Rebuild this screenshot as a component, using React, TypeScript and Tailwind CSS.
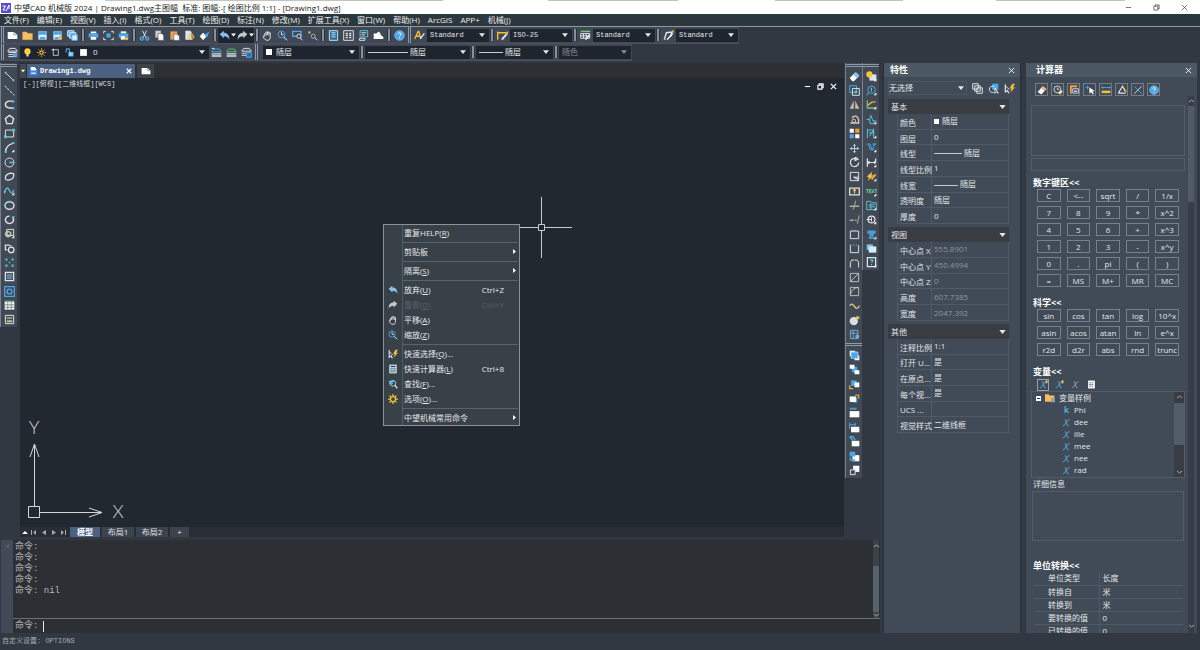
import type { ReactNode } from "react";
import clsx from "clsx";

const W = "#dfe4e8";
const B = "#4ea6e6";
const C = "#5cc3d6";
const Y = "#f2bf3c";
const corner = <path d="M15 11v4h-4z" fill="#fff" stroke="none" />;

const icons: Record<string, ReactNode> = {
  // file
  new: <><path d="M1 3h9l5 4v6H1z" fill="#fff" stroke="none" /><path d="M10 3v4h5" stroke="#7aa" /></>,
  open: <path d="M1 3h6l1.500 2H15v9H1z" fill="#f3bd70" stroke="#e09f45" strokeWidth={1} />,
  save: <><path d="M2 2h12v12H2z" fill="#dbeeff" stroke="none" /><path d="M2 2h12v5H2zM4 10h8v4H4z" fill={B} stroke="none" /></>,
  saveAs: <><path d="M2 2h12v12H2z" fill="#dbeeff" stroke="none" /><path d="M2 2h12v5H2zM4 10h5v4H4z" fill={B} stroke="none" /><path d="M8 14l6-6" stroke="#e89b3c" strokeWidth={2.5} /></>,
  saveAll: <><path d="M1 1h9v8H1z" fill={B} stroke="#dbeeff" /><path d="M4 4h9v8H4z" fill={B} stroke="#dbeeff" /><path d="M7 7h8v8H7z" fill="#dbeeff" stroke={B} /></>,
  print: <><path d="M4 2h8v3H4zM4 10h8v4H4z" fill="#fff" stroke="none" /><path d="M1 5h14v6H1z" fill={B} stroke="none" /><path d="M5 10h6v3H5z" fill="#fff" stroke="none" /></>,
  preview: <><path d="M1 5V2h3M12 2h3v3M15 11v3h-3M4 14H1v-3" stroke={W} /><path d="M5 5h6v6H5z" fill={B} stroke="none" /></>,
  plot: <><path d="M4 2h8v3H4z" fill="#fff" stroke="none" /><path d="M1 5h14v6H1z" fill={B} stroke="none" /><path d="M4 9h6v5H4z" fill="#fff" stroke="none" /><circle cx="12.500" cy="12.500" r="2.500" fill={Y} stroke="none" /></>,
  cut: <><path d="M5 1l5 10M11 1L6 11" stroke={W} /><circle cx="4" cy="12.500" r="2.200" stroke={B} strokeWidth={2} /><circle cx="12" cy="12.500" r="2.200" stroke={B} strokeWidth={2} /></>,
  copy: <><path d="M2 1h8v10H2z" fill="#c8cdd2" stroke="none" /><path d="M6 5h5l3 3v7H6z" fill="#fff" stroke="#667" strokeWidth={1} /></>,
  paste: <><path d="M2 2h10v12H2z" fill="#e8a157" stroke="none" /><path d="M7 6h5l3 3v6H7z" fill="#fff" stroke="#667" strokeWidth={1} /></>,
  matchGear: <><path d="M2 1h7l2 2v11H2z" fill="#dfe4e8" stroke="none" /><circle cx="10.500" cy="10" r="3.200" stroke={Y} strokeWidth={2.500} strokeDasharray="2 .8" /></>,
  brush: <><path d="M1 9l5-5 5 5-5 6z" fill="#fff" stroke="none" /><path d="M8 7l4 4 3-9z" fill={B} stroke="none" /></>,
  undo: <path d="M1 6l6-5v3c5 0 8 3 8 10-2-4-4-5-8-5v3z" fill="#8cbcf2" stroke="none" />,
  redo: <path d="M15 6L9 1v3C4 4 1 7 1 14c2-4 4-5 8-5v3z" fill="#c3c8cd" stroke="none" />,
  hand: <path d="M4 9V5q1-1 2 0V3q1-1 2 0 1-1 2 0v1q1-1 2 0v6c0 3-1 5-4 5-3 0-5-2-6-5-1-2 1-2 2-1zM6 5v3M8 3v4M10 4v4" stroke={W} />,
  zoom: <><circle cx="6.500" cy="6.500" r="5" stroke={B} /><path d="M6.500 3v4h3M10 10l5 5" stroke={W} /><path d="M10 13h4" stroke={B} /></>,
  zoomWindow: <><path d="M1 2h12v7H1z" stroke={B} strokeWidth={2} /><circle cx="10" cy="9" r="3" fill="#39424d" stroke={W} /><path d="M12 11l3 4" stroke={W} /></>,
  zoomPrev: <><path d="M2 2h3v3H2z" fill={Y} stroke="none" /><circle cx="9" cy="9" r="3" stroke="#9fb4c4" /><path d="M11 11l4 4" stroke={W} /></>,
  calc: <><path d="M2 1h12v14H2z" fill="#c9e2f3" stroke="none" /><path d="M4 3h8v2H4z" fill="#35414d" stroke="none" /><path d="M4 7.500h8M4 10h8M4 12.500h8" stroke="#35414d" strokeDasharray="2 1" /></>,
  sheetSet: <><path d="M2 1h12v14H2z" fill="#2d6f9c" stroke="#c9e2f3" /><path d="M5 4h6M5 7h6M5 10h6" stroke="#c9e2f3" /></>,
  grid: <><path d="M1 1h14v14H1z" stroke={W} /><path d="M4 5h8M4 8h8M4 11h8" stroke={W} strokeWidth={2} strokeDasharray="3 2" /></>,
  props: <><path d="M3 1h11v9H3z" fill="#3b4b58" stroke={C} /><path d="M5 4h7M5 7h5M2 12h8v3H2z" stroke={W} /></>,
  cloud: <path d="M1 12V5h4l3-3 3 3v2l4 3v3H1z" fill="#fff" stroke="none" />,
  help: <><circle cx="8" cy="8" r="7" fill={B} stroke="#8ccbf5" strokeWidth={1} /><path d="M6 6q0-2 2-2t2 2-2 3M8 11v1.500" stroke="#fff" /></>,
  textStyle: <><path d="M1 13L6 2h1l3 11M3 9h5" stroke={Y} strokeWidth={2} /><path d="M9 13l6-8" stroke={W} strokeWidth={2} /></>,
  dimStyle: <><path d="M1 2v12M15 2v4M1 4h13" stroke={Y} strokeWidth={2} /><path d="M7 14l7-8" stroke={W} strokeWidth={3} /></>,
  tableStyle: <><path d="M1 2h14" stroke="#7fbf7f" strokeWidth={2} /><path d="M1 5h13v7H1zM1 8.500h13M5 5v7M9 5v7" stroke={W} /><path d="M8 14l6-7" stroke="#fff" strokeWidth={2} /></>,
  leaderStyle: <><path d="M2 13L5 4l8-1-2 7" stroke={W} strokeWidth={2} /><path d="M6 14l8-9" stroke="#fff" strokeWidth={2} /><path d="M13 1h2v3M1 13l3 1" stroke={Y} /></>,
  // layers
  layers: <><path d="M4 2h8l3 4H1z" stroke={W} /><path d="M2 8h12M2 11h12M2 14h12" stroke={W} /><path d="M9 9h6v5H9z" fill={B} stroke="none" /></>,
  layerPrev: <><path d="M4 3h8l3 4H1z" stroke={B} /><path d="M1 10h14M1 13h14" stroke={W} strokeWidth={2} /><path d="M1 2h4" stroke={W} /></>,
  layerMake: <><path d="M4 3h8l3 4H1z" stroke="#67bf78" /><path d="M1 10h14M1 13h14" stroke={W} strokeWidth={2} /></>,
  layerState: <><path d="M4 2h8l3 4H1zM1 9h8M1 12h8" stroke={W} /><path d="M8 8h7v7H8z" fill="#296fa4" stroke={B} /></>,
  bulb: <><circle cx="8" cy="6" r="5.500" fill="#fbd23c" stroke="none" /><path d="M6 11h4v4H6z" fill="#d9d9d9" stroke="none" /></>,
  sun: <><circle cx="8" cy="8" r="3" stroke={Y} strokeWidth={2} /><path d="M8 0v3M8 13v3M0 8h3M13 8h3M2.500 2.500l2 2M11.500 11.500l2 2M13.500 2.500l-2 2M4.500 11.500l-2 2" stroke={Y} /></>,
  frame: <><path d="M4 3h9v10H4z" stroke={W} /><path d="M1 3h4M4 1v4" stroke={W} /></>,
  lock: <><path d="M2 8V4q0-3 3-3t3 3v4" stroke={B} strokeWidth={2} /><path d="M6 7h9v8H6z" fill="#6dc0f2" stroke="none" /><path d="M10 9v4" stroke="#fff" /></>,
  swatch: <path d="M2 2h12v12H2z" fill="#fff" stroke="none" />,
  // draw
  line: <><path d="M3 3l10 10" stroke={W} /><path d="M1 1h3v3H1zM12 12h3v3h-3z" fill={C} stroke="none" /></>,
  xline: <><path d="M1 1l14 14" stroke={W} strokeDasharray="4 1.500" /><path d="M5 5h2v2H5zM9 9h2v2H9z" fill={C} stroke="none" /></>,
  pline: <><path d="M13 3H7Q2 4 2 8t5 5h7" stroke={W} strokeWidth={2} /><path d="M12 2h3v3h-3zM12 12h3v3h-3z" fill={C} stroke="none" /></>,
  polygon: <path d="M8 2l6 4.500L12 14H4L2 6.500z" stroke={W} strokeWidth={2} />,
  rect: <><path d="M2 3h12v10H2z" stroke={W} /><path d="M0 11h4v4H0zM12 1h4v4h-4z" fill={C} stroke="none" /></>,
  arc: <><path d="M2 15Q3 4 13 2" stroke={W} strokeWidth={2} /><path d="M1 13h3v3H1zM12 0h3v3h-3z" fill={C} stroke="none" />{corner}</>,
  circle: <><circle cx="8" cy="8" r="6.500" stroke={W} /><path d="M8 8h6" stroke={C} strokeWidth={2.500} /></>,
  revcloud: <path d="M14 4q1 8-6 9-6 1-6-3 0-5 7-7 4 0 5 1z" stroke={W} strokeWidth={1.800} />,
  spline: <><path d="M1 10Q4 0 8 8t6-1" stroke={C} strokeWidth={2} /><path d="M1 9v3" stroke={W} />{corner}</>,
  ellipse: <><ellipse cx="8" cy="8" rx="6.500" ry="5.500" stroke={W} strokeWidth={2} /><path d="M7 1h3v3H7zM0 7h3v3H0z" fill={C} stroke="none" /></>,
  earc: <><path d="M13 4q3 9-5 10Q2 13 2 8q1-5 6-5" stroke={W} strokeWidth={2} /><path d="M12 3h3v3h-3z" fill={C} stroke="none" /></>,
  block: <><path d="M4 2h10v9H4z" stroke={W} /><circle cx="6" cy="9" r="4" stroke={W} /><path d="M5 6h5v4H5z" stroke="#c6b98b" />{corner}</>,
  insert: <><path d="M8 3H2v7h3M11 4H8" stroke={W} strokeWidth={1.800} /><circle cx="10.500" cy="10" r="4" stroke={W} strokeWidth={1.800} /></>,
  points: <path d="M2 2h3v3H2zM11 2h3v3h-3zM2 11h3v3H2zM11 11h3v3h-3zM7 7h2v2H7z" fill={C} stroke="none" />,
  hatch: <><path d="M2 2h12v12H2z" stroke={W} strokeWidth={1.800} /><path d="M4 4h8v8H4z" fill="#64849d" stroke="none" /></>,
  region: <><path d="M1 1h14v14H1z" stroke={B} strokeWidth={1.800} /><circle cx="8" cy="8" r="3.500" stroke={B} strokeWidth={2} /></>,
  table: <><path d="M1 3h14v11H1z" fill="#fff" stroke="none" /><path d="M1 2h14" stroke="#71b98a" strokeWidth={2} /><path d="M1 7h14M1 10.500h14M5.500 3v11M10.500 3v11" stroke="#566" strokeWidth={1} /></>,
  mtext: <><path d="M2 2h12v12H2z" stroke={W} /><path d="M4 5h8v2H4zM4 9h8v3H4z" fill="#c7bf9f" stroke="none" /></>,
  // modify
  erase: <><path d="M1 10l8-8 6 5-8 8q-3 0-6-5z" fill="#fff" stroke="none" /><path d="M6 5l3-3q3-1 6 5l-3 3z" fill="#7cc3f3" stroke="none" /></>,
  duplicate: <><path d="M1 1h10v10H1z" stroke={B} /><path d="M5 5h10v10H5z" stroke={W} /><path d="M10 7v6M7 10h6" stroke={C} /></>,
  mirror: <><path d="M7 2v12H1z" fill="#b9bcbc" stroke="none" /><path d="M9 2v12h6z" fill="#d5b98a" stroke="none" /></>,
  offset: <><path d="M2 13h12V9Q13 3 9 3T5 6" stroke="#d8cfb4" strokeWidth={2} /><circle cx="7" cy="10" r="2.500" stroke="#d8cfb4" /></>,
  array: <><path d="M1 1h6v6H1zM9 9h6v6H9z" fill="#fff" stroke="none" /><path d="M1 9h6v6H1z" fill={B} stroke="none" /><path d="M9 1h6v6H9z" fill="#efa23c" stroke="none" /></>,
  move: <path d="M8 2v12M2 8h12M6 4l2-2 2 2M6 12l2 2 2-2M4 6L2 8l2 2M12 6l2 2-2 2" stroke="#b9d2e6" />,
  rotate: <path d="M9 2q-7 0-7 6 1 6 6 6 6-1 6-6M9 0v5l4-2z" stroke={W} strokeWidth={1.800} />,
  scale: <><path d="M2 2h12v12H2z" stroke={W} /><path d="M8 9h5v5M6 9h3v3M10 10l3 3" stroke={W} /></>,
  stretch: <><path d="M1 3h14v10H1z" stroke={W} strokeWidth={1.800} /><path d="M8 11V5M6 7l2-2 2 2" stroke={Y} strokeWidth={1.800} /></>,
  trim: <><path d="M1 9h14" stroke={W} /><path d="M10 1L6 14" stroke="#c9b184" /></>,
  extend: <><path d="M1 9h6M9 9h2" stroke={W} /><path d="M15 2l-3 12" stroke="#c9b184" /></>,
  breakAt: <><path d="M2 3h12v11H2z" stroke={W} /><path d="M4 2h8" stroke={C} strokeDasharray="2 2" /></>,
  breakOff: <><path d="M14 3v11H2V3" stroke={W} /><path d="M2 3h12" stroke={C} strokeDasharray="2 2" /></>,
  join: <><path d="M2 14V6l2-3h3M9 3h3l2 3v8" stroke={W} /><path d="M5 3h6" stroke={Y} strokeDasharray="2 1" /></>,
  chamfer: <><path d="M2 2h12v12H2z" stroke="#b9bfc5" /><path d="M2 14L14 2" stroke="#d0c9a6" /></>,
  fillet: <><path d="M2 14V2h12v12z" stroke="#b9bfc5" /><path d="M2 12Q4 3 14 2" stroke="#d0c9a6" /></>,
  blend: <path d="M1 7q3-5 7 1t7-1" stroke="#cfbf8d" strokeWidth={2} />,
  explode: <><circle cx="7" cy="9" r="6" fill="#d9dfe4" stroke="none" /><path d="M10 2h5v4h-5z" fill="#dcc257" stroke="none" /></>,
  pedit: <><path d="M2 2h11v12H2zM2 6h11M6 2v12" stroke="#77abd4" /><circle cx="12" cy="11" r="3" fill="#77abd4" stroke="none" /></>,
  front: <><path d="M1 1h8v8H1zM8 8h7v7H8z" fill="#fff" stroke="none" /><path d="M3 3h10v9H3z" fill={B} stroke="#9bd3f7" /></>,
  back: <><path d="M4 4h8v8H4z" fill={B} stroke="none" /><path d="M1 1h7v6H1zM8 9h7v6H8z" fill="#fff" stroke="none" /></>,
  above: <><path d="M3 2h8v8H3z" fill={B} stroke="none" /><path d="M8 5h7v7H8z" fill="#fff" stroke="none" /><path d="M1 9v5h5" stroke="#e8a23a" strokeWidth={2} /></>,
  under: <><path d="M6 6h6v8H6z" fill={B} stroke="none" /><path d="M1 5h9v8H1z" fill="#fff" stroke="none" /><path d="M9 3h5v5" stroke="#e8a23a" strokeWidth={2} /></>,
  textFront: <><path d="M1 6h14v9H1z" fill="#fff" stroke="none" /><path d="M1 1h10v3H1z" fill="#5b91b9" stroke="none" /></>,
  dimFront: <><path d="M3 7h12v8H3z" fill="#fff" stroke="none" /><path d="M1 1v9M9 1v6M1 4h8" stroke={B} /></>,
  leadFront: <><path d="M4 7h11v8H4z" fill="#fff" stroke="none" /><path d="M1 1l5 6M1 1h5l3 5" stroke={B} strokeWidth={2} /></>,
  allFront: <><path d="M5 6h10v9H5z" fill="#fff" stroke="none" /><path d="M1 1h8v7H1z" fill={B} stroke="none" /><path d="M2 9v4h7" stroke={B} strokeWidth={2} /></>,
  hatchBack: <><path d="M6 1h9v9H6z" fill="#fff" stroke="none" /><path d="M2 7h7v7H2z" fill="#414b57" stroke={W} /></>,
  // mechanical
  mBlock: <><path d="M5 5h10v9H5z" fill="#dbe7f0" stroke="none" /><circle cx="5" cy="5" r="4.500" fill="#f6c443" stroke="none" />{corner}</>,
  mDetail: <><circle cx="8" cy="7" r="5.500" stroke={B} /><path d="M7 5l1-1v6M4 11l-3 4" stroke={C} />{corner}</>,
  mPath: <><path d="M2 2v11h12" stroke="#7fb78e" strokeWidth={2} /><path d="M3 9l5-4 6-1" stroke={Y} strokeWidth={1.800} />{corner}</>,
  mPeak: <><path d="M1 8h4l2-6 3 8h5M5 8l1 6h5l1-4" stroke={C} />{corner}</>,
  mFit: <><path d="M2 1v14M2 3h9v9M5 12l6-9M11 1v14M4 7h8" stroke={C} />{corner}</>,
  mGear: <><path d="M1 3h5l3 9 4-10M4 4l2 7h6M9 3h6" stroke={B} />{corner}</>,
  mDim: <><path d="M2 2v12M14 2v5M4 8h9M5 6L3 8l2 2M12 6l2 2-2 2" stroke={W} strokeWidth={1.800} />{corner}</>,
  mBolt: <><path d="M1 8l8-7-1 5h3L3 14l1-5z" fill={Y} stroke="none" /><path d="M8 12l6-7" stroke="#e4a744" strokeWidth={3} />{corner}</>,
  mText: <><path d="M0 5h4M2 5v5M5 5h3M5 7.500h3M5 10h3M5 5v5M9 5l3 5M12 5l-3 5M13 5h3M14.500 5v5" stroke="#6fc59b" />{corner}</>,
  mTable: <><path d="M1 2h6l1 2h7v10H1zM4 7h9M4 10h9M7 5v9" stroke={C} />{corner}</>,
  mHole: <><circle cx="8" cy="8" r="5" stroke={W} strokeWidth={1.800} /><path d="M1 8h7M8 5v6" stroke={W} />{corner}</>,
  mPart: <><path d="M2 2h12v5H2zM5 7h6v3H5zM4 11h8v3H4z" fill="#4aa0d0" stroke="none" />{corner}</>,
  mCloud: <><path d="M1 2h9v8H1z" fill="#7ec2ef" stroke="none" /><path d="M4 5h11v9H4z" fill="#d8ecfa" stroke="none" /></>,
  mHelp: <><path d="M2 1h12v13H2z" stroke={W} strokeWidth={1.800} /><path d="M6 5q2-2 4 0 0 1-2 3M8 10v2" stroke={C} strokeWidth={1.800} />{corner}</>,
  // panels and menu
  pickAdd: <path d="M1 1h8v8H1zM4 4h8v8H4zM7 7h8v8H7z" stroke={W} />,
  pickSet: <><path d="M6 1h9v9H6z" fill={B} stroke="none" /><path d="M9 5q-7-1-7 4t6 5M10 7v8l2-2 3 2z" stroke={W} /></>,
  quick: <><path d="M2 2v11l3-2 2 4" stroke={W} strokeWidth={1.800} /><path d="M2 4l6 6" stroke={W} /><path d="M12 1l-4 7h3l-2 6 7-8h-3l3-5z" fill={Y} stroke="none" /></>,
  find: <><path d="M1 4h8M2 7h6" stroke={B} strokeWidth={2.500} /><circle cx="8" cy="7" r="4.500" stroke="#bcd8ec" /><path d="M11 10l4 5" stroke={W} strokeWidth={2} /></>,
  gear: <><circle cx="8" cy="8" r="4" stroke={Y} strokeWidth={2} /><path d="M8 0v4M8 12v4M0 8h4M12 8h4M2.500 2.500l2.500 2.500M11 11l2.500 2.500M13.500 2.500L11 5M5 11l-2.500 2.500" stroke={Y} strokeWidth={2} /></>,
  eraser: <><path d="M1 11l8-9 6 4-8 9z" fill="#fff" stroke="none" /><path d="M7 5l2-3 6 4-3 4z" fill="#efb06c" stroke="none" /></>,
  history: <><circle cx="7" cy="7" r="5.500" stroke={W} /><path d="M7 4v3h3" stroke={W} /><path d="M8 13l4-5 4 2-4 5z" fill="#f3d9b0" stroke="none" /></>,
  toCmd: <><path d="M2 2h11M3 1v13" stroke="#ec9d50" strokeWidth={3} /><path d="M6 6h9v7H6z" fill="#414b57" stroke={W} /><path d="M8 10h5" stroke={W} strokeWidth={2} /></>,
  pick: <><path d="M1 4h6M4 1v6" stroke={B} /><path d="M7 4v10l3-3 2 4 2-1-2-4h4z" fill="#fff" stroke="none" /></>,
  measure: <><path d="M1 4h14M3 2L1 4l2 2M13 2l2 2-2 2" stroke={B} /><path d="M1 9h14v4H1z" fill={Y} stroke="none" /></>,
  angle: <><path d="M2 13h12M2 13L9 2l4 8" stroke={W} strokeWidth={1.800} /><path d="M10 4l5 7" stroke={Y} strokeWidth={2} /></>,
  intersect: <><path d="M2 2l12 12" stroke={B} /><path d="M14 2L2 14" stroke={W} /></>,
  folder: <><path d="M0 2h6l1 2h8v10H0z" fill="#f4bb63" stroke="none" /><path d="M10 8h6v7h-6z" fill="#8e9aa4" stroke="none" /></>,
  sheet: <><path d="M2 1h12v14H2z" fill="#fff" stroke="none" /><path d="M4 5h8M4 8h8M4 11h8" stroke="#46505c" strokeDasharray="3 1" /></>,
  docTab: <><path d="M3 0h7l3 4v4H3z" fill="#fff" stroke="none" /><path d="M1 6h14v9H1z" fill="#3f84f0" stroke="none" /><path d="M4 11h8" stroke="#fff" strokeWidth={2} /></>,
  minimize: <path d="M2 8h12" />,
  restore: <path d="M2 5h9v9H2zM5 5V2h9v9h-3" />,
  close: <path d="M2 2l12 12M14 2L2 14" />,
};

function Icon({ name, className = "size-3" }: { name: string; className?: string }) {
  return (
    <svg viewBox="0 0 16 16" fill="none" stroke="currentColor" strokeWidth={1.4} className={clsx("shrink-0", className)} aria-hidden="true">
      {icons[name]}
    </svg>
  );
}

function Caret({ className = "w-[7px]" }: { className?: string }) {
  return (
    <svg viewBox="0 0 8 5" className={clsx("h-1 shrink-0", className)} aria-hidden="true">
      <path d="M0 0h8L4 5z" fill="currentColor" />
    </svg>
  );
}

function Tool({ name, className = "w-[15px]" }: { name: string; className?: string }) {
  return (
    <button aria-label={name} className={clsx("flex h-full items-center justify-center", className)}>
      <Icon name={name} className="size-[11px]" />
    </button>
  );
}

function Tools({ names }: { names: string[] }) {
  return names.map((name) => <Tool key={name} name={name} />);
}

function Sep() {
  return <div className="mx-px h-3 w-1 shrink-0 border-x border-[#2b313a] bg-[#8590a0]" />;
}

function Grip() {
  return <div className="mx-px h-4 w-[3px] shrink-0 border-x border-[#8d9bb0]" />;
}

type ComboProps = { label: string; value: string; className?: string; color?: string; children?: ReactNode };

function Combo({ label, value, className, color = "text-[#e3e6ea]", children }: ComboProps) {
  return (
    <div className={clsx("flex h-[13px] items-center bg-[#1f252f] pl-[3px]", color, className)}>
      {children}
      <select aria-label={label} className="h-full min-w-0 flex-1 appearance-none bg-transparent">
        <option>{value}</option>
      </select>
      <Caret className="pointer-events-none mr-1 w-1.5" />
    </div>
  );
}

const menus = ["文件(F)", "编辑(E)", "视图(V)", "插入(I)", "格式(O)", "工具(T)", "绘图(D)", "标注(N)", "修改(M)", "扩展工具(X)", "窗口(W)", "帮助(H)", "ArcGIS", "APP+", "机械(J)"];

function TitleBar() {
  return (
    <header className="flex h-3.5 shrink-0 flex-col bg-white text-[#222]">
      {/* shadow of the windows behind */}
      <div className="grid h-px grid-cols-[105fr_338fr_105fr_130fr_97fr_128fr_93fr_129fr_75fr]">
        {Array.from({ length: 9 }, (_, i) => <div key={i} className={clsx(i % 2 === 1 && "bg-[#c3c3c3]")} />)}
      </div>
      <div className="flex flex-1 items-center">
        <svg viewBox="0 0 10 10" className="ml-px size-2.5" aria-hidden="true">
          <rect width="10" height="10" fill="#5b4bc4" />
          <path d="M1.500 3h3L2 7h2M5 8l3-6v4" fill="none" stroke="#fff" strokeWidth="1" />
        </svg>
        <h1 className="ml-[3px] text-[8px] leading-[13px] whitespace-pre">中望CAD 机械版 2024 | Drawing1.dwg主图幅  标准: 图幅:-[ 绘图比例 1:1] - [Drawing1.dwg]</h1>
        <div className="mr-3 ml-auto flex gap-[21px]">
          {["minimize", "restore", "close"].map((n) => (
            <button key={n} aria-label={n}><Icon name={n} className="size-[7px]" /></button>
          ))}
        </div>
      </div>
    </header>
  );
}

function MenuBar() {
  return (
    <nav className="flex h-[13px] shrink-0 items-center gap-2 border-b border-[#8f999f] bg-[#2c373e] pl-1 leading-3 text-[#eceff1]">
      {menus.map((m) => <button key={m} className="whitespace-nowrap">{m}</button>)}
    </nav>
  );
}

const styles = [
  { label: "文字样式", icon: "textStyle", value: "Standard" },
  { label: "标注样式", icon: "dimStyle", value: "ISO-25" },
  { label: "表格样式", icon: "tableStyle", value: "Standard" },
  { label: "引线样式", icon: "leaderStyle", value: "Standard" },
];

function Toolbars() {
  return (
    <div className="flex shrink-0 flex-col items-start pb-px">
      <div className="flex h-[17px] items-center border-b border-[#4b5361] bg-[#3f4854] pr-px">
        <Grip />
        <Tools names={["new", "open", "save", "saveAs", "saveAll"]} />
        <Sep />
        <Tools names={["print", "preview", "plot"]} />
        <Sep />
        <Tools names={["cut", "copy", "paste", "matchGear", "brush"]} />
        <Sep />
        <div className="flex h-[15px] items-center bg-[#1f252f] text-white">
          <Tool name="undo" className="w-[13px]" />
          <Caret className="w-[5px]" />
          <Tool name="redo" className="w-[13px]" />
          <Caret className="w-[5px]" />
        </div>
        <Sep />
        <Tools names={["hand", "zoom", "zoomWindow", "zoomPrev"]} />
        <Sep />
        <Tools names={["sheetSet", "grid", "props", "cloud"]} />
        <Sep />
        <Tool name="help" />
        <Grip />
        {styles.map((s, i) => (
          <div key={s.label} className="flex items-center">
            {i > 0 && <Sep />}
            <Tool name={s.icon} />
            <Combo label={s.label} value={s.value} className="w-[62px] font-[Liberation_Mono,Noto_Sans_CJK_SC,monospace] text-[7px]" />
          </div>
        ))}
      </div>
      <div className="flex h-[17px] items-center border-b border-[#4b5361] bg-[#3f4854] pr-px">
        <Grip />
        <Tool name="layers" />
        <Combo label="图层" value="0" className="w-[189px] gap-[5px] text-[8px]">
          {["bulb", "sun", "frame", "lock", "swatch"].map((n) => <Icon key={n} name={n} className="size-[9px]" />)}
        </Combo>
        <Tools names={["layerPrev", "layerMake", "layerState"]} />
        <Grip />
        <Combo label="颜色" value="随层" className="ml-1 w-[96px] gap-1">
          <div className="size-1.5 bg-white" />
        </Combo>
        <Sep />
        <Combo label="线型" value="随层" className="w-[105px] gap-0.5">
          <div className="h-px w-10 bg-[#c9ced4]" />
        </Combo>
        <Sep />
        <Combo label="线宽" value="随层" className="w-[77px] gap-0.5">
          <div className="h-px w-6 bg-[#c9ced4]" />
        </Combo>
        <Sep />
        <Combo label="打印样式" value="随色" className="w-[72px]" color="text-[#858b93]" />
      </div>
    </div>
  );
}

function Rail({ names, className }: { names: string[]; className?: string }) {
  return (
    <div className={clsx("flex w-[17px] flex-col border-l border-[#77818f] bg-[#414954]", className)}>
      <div className="mt-px mb-0.5 h-[3px] border-y border-[#8d9bb0]" />
      {names.map((n) => (
        <button key={n} aria-label={n} className="flex min-h-0 flex-1 items-center justify-center">
          <Icon name={n} className="size-[11px]" />
        </button>
      ))}
    </div>
  );
}

const draw = ["line", "xline", "pline", "polygon", "rect", "arc", "circle", "revcloud", "spline", "ellipse", "earc", "block", "insert", "points", "hatch", "region", "table", "mtext"];
const modify = ["erase", "duplicate", "mirror", "offset", "array", "move", "rotate", "scale", "stretch", "trim", "extend", "breakAt", "breakOff", "join", "chamfer", "fillet", "blend", "explode", "pedit"];
const order = ["front", "back", "above", "under", "textFront", "dimFront", "leadFront", "allFront", "hatchBack"];
const mech = ["mBlock", "mDetail", "mPath", "mPeak", "mFit", "mGear", "mDim", "mBolt", "mText", "mTable", "mHole", "mPart", "mCloud", "mHelp"];

type Item = { text: string; mnemonic?: string; tail?: string; icon?: string; keys?: string; sub?: boolean; off?: boolean };

const contextGroups: Item[][] = [
  [{ text: "重复HELP", mnemonic: "R" }],
  [{ text: "剪贴板", sub: true }],
  [{ text: "隔离", mnemonic: "S", sub: true }],
  [
    { text: "放弃", mnemonic: "U", icon: "undo", keys: "Ctrl+Z" },
    { text: "重做", mnemonic: "D", icon: "redo", keys: "Ctrl+Y", off: true },
    { text: "平移", mnemonic: "A", icon: "hand" },
    { text: "缩放", mnemonic: "Z", icon: "zoom" },
  ],
  [
    { text: "快速选择", mnemonic: "Q", tail: "...", icon: "quick" },
    { text: "快速计算器", mnemonic: "L", icon: "calc", keys: "Ctrl+8" },
    { text: "查找", mnemonic: "F", tail: "...", icon: "find" },
    { text: "选项", mnemonic: "O", tail: "...", icon: "gear" },
  ],
  [{ text: "中望机械常用命令", sub: true }],
];

function ContextMenu() {
  return (
    <div role="menu" className="absolute top-[146px] left-[363px] w-[137px] border border-[#8c9298] bg-[#384048] text-[#e6e9ec]">
      {contextGroups.map((group, g) => (
        <div key={g}>
          {g > 0 && (
            <div className="flex h-1 items-center">
              <div className="h-full w-[19px] border-r border-[#535b64]" />
              <div className="mr-px h-px flex-1 bg-[#5a626b]" />
            </div>
          )}
          {group.map((item) => (
            <button key={item.text} role="menuitem" disabled={item.off} className="flex h-[15px] w-full items-center">
              <span className="flex h-full w-[19px] shrink-0 items-center justify-center border-r border-[#535b64]">
                {item.icon && <Icon name={item.icon} className="size-[10px]" />}
              </span>
              <span className={clsx("ml-px whitespace-nowrap", item.off && "text-[#59616a]")}>
                {item.text}
                {item.mnemonic && <>(<u>{item.mnemonic}</u>)</>}
                {item.tail}
              </span>
              {item.keys && <span className={clsx("mr-[15px] ml-auto", item.off && "text-[#59616a]")}>{item.keys}</span>}
              {item.sub && (
                <svg viewBox="0 0 3 5" className="mr-[3px] ml-auto h-[5px] w-[3px]" aria-hidden="true">
                  <path d="M0 0l3 2.500L0 5z" fill="#fff" />
                </svg>
              )}
            </button>
          ))}
        </div>
      ))}
    </div>
  );
}

function Canvas() {
  return (
    <div className="relative min-h-0 flex-1 overflow-hidden bg-[#212830]">
      <div className="flex items-center justify-between pr-[7px] pl-[3px] text-[#d5d9dd]">
        <p className="font-[Liberation_Mono,Noto_Sans_CJK_SC,monospace] text-[7px] leading-3">[-][俯视][二维线框][WCS]</p>
        <div className="flex gap-[6px] pt-1 text-white">
          {["minimize", "restore", "close"].map((n) => (
            <button key={n} aria-label={n}><Icon name={n} className="size-[7px] stroke-[2.5]" /></button>
          ))}
        </div>
      </div>

      {/* crosshair */}
      <svg viewBox="0 0 61 61" className="absolute top-[119px] left-[491px] size-[61px]" fill="none" stroke="#c6cacd" aria-hidden="true">
        <path d="M0 30.500h27M34 30.500h27M30.500 0v27M30.500 34v27M27.500 27.500h6v6h-6z" />
      </svg>

      {/* UCS axes */}
      <svg viewBox="0 0 110 110" className="absolute bottom-0 left-0 size-[110px]" fill="none" stroke="#d3d7da" aria-hidden="true">
        <path d="M8.500 89.500h11v11h-11zM14.500 89.500v-62M10 40l4.500-13L19 40M19.500 95.500h62M69 91l13 4.500L69 100" />
        <text x="14" y="17" textAnchor="middle" fill="#d3d7da" stroke="none" className="font-[Lato,sans-serif] text-[18px] font-light">Y</text>
        <text x="98" y="101" textAnchor="middle" fill="#d3d7da" stroke="none" className="font-[Lato,sans-serif] text-[18px] font-light">X</text>
      </svg>

      <ContextMenu />
    </div>
  );
}

const arrows = ["M0 5h6L3 2z", "M0 1h1v5H0zM5 1v5L2 3.500z", "M5 1v5L1 3.500z", "M1 1v5l4-2.500z", "M5 1h1v5H5zM1 1v5l3-2.500z"];

function Drawing() {
  return (
    <section className="flex min-w-0 flex-1 flex-col">
      <div className="flex h-[15px] shrink-0 items-end bg-[#2c2f33] text-white">
        <button aria-label="文件列表" className="flex h-3.5 w-1.5 items-center justify-center bg-[#434951]"><Caret className="w-1" /></button>
        <div className="ml-px flex h-3.5 w-[108px] items-center bg-[#4c6182] pr-[3px] pl-0.5">
          <Icon name="docTab" className="size-[9px]" />
          <span className="ml-0.5 font-[Liberation_Mono,monospace] text-[7px] font-bold">Drawing1.dwg</span>
          <button aria-label="关闭图纸" className="ml-auto"><Icon name="close" className="size-[6px] stroke-3" /></button>
        </div>
        <div className="ml-0.5 flex h-3.5 w-[17px] items-center justify-center bg-[#3d4249]">
          <button aria-label="新建图纸"><Icon name="new" className="size-[10px]" /></button>
        </div>
      </div>
      <Canvas />
      <div className="flex h-2.5 shrink-0 gap-0.5 bg-[#2a2e34] text-[8px] leading-[10px] text-[#e1e4e8]">
        <div className="flex w-12 items-center justify-around">
          {arrows.map((d, i) => (
            <button key={d} aria-label={`布局导航 ${i + 1}`}>
              <svg viewBox="0 0 6 7" className="h-[7px] w-1.5"><path d={d} fill={i ? "#a3a9b0" : "#fff"} /></svg>
            </button>
          ))}
        </div>
        <button className="w-[30px] bg-[#4c6182] font-bold text-white">模型</button>
        <button className="w-8 bg-[#3d434c]">布局1</button>
        <button className="w-8 bg-[#3d434c]">布局2</button>
        <button className="w-[19px] bg-[#3d434c]">+</button>
      </div>
    </section>
  );
}

const chevronUp = "M1 4l2.500-2L6 4";
const chevronDown = "M1 2l2.500 2L6 2";

function Chevron({ d }: { d: string }) {
  return (
    <svg viewBox="0 0 7 6" className="h-1.5 w-[7px] shrink-0 self-center" fill="none" stroke="#a2a8af" aria-hidden="true">
      <path d={d} />
    </svg>
  );
}

function CommandLine() {
  return (
    <section className="mt-[3px] flex h-[93px] shrink-0 font-[Liberation_Mono,Noto_Sans_CJK_SC,monospace] text-[9px] leading-[11px] text-[#b3b7bb]">
      <div className="ml-px flex w-3 justify-center bg-[#424a58] pt-[3px] text-[#8b93a0]">
        <button aria-label="关闭命令行" className="h-[7px]"><Icon name="close" className="size-[5px]" /></button>
      </div>
      <div className="flex min-w-0 flex-1 flex-col bg-[#2c2f33]">
        <div className="flex min-h-0 flex-1">
          <div className="flex-1 pt-0.5 pl-[2px]">
            {["命令:", "命令:", "命令:", "命令:", "命令: nil"].map((l, i) => <p key={i}>{l}</p>)}
          </div>
          <div className="mr-px flex w-[6px] flex-col bg-[#3d4148] pt-[3px]">
            <Chevron d={chevronUp} />
            <div className="mt-[17px] flex-1 bg-[#56626e]" />
            <Chevron d={chevronDown} />
          </div>
        </div>
        <label className="flex h-[15px] items-center border-t border-[#6d7073] pl-[2px]">
          命令:
          <span className="ml-[5px] h-[11px] w-px bg-[#e4e6e8]" />
          <input className="min-w-0 flex-1 bg-transparent caret-white outline-none" />
        </label>
      </div>
    </section>
  );
}

function PanelTitle({ children, className }: { children: string; className?: string }) {
  return (
    <div className={clsx("flex h-3.5 shrink-0 items-center bg-[#4c5863] pr-[5px] text-[9px] font-bold text-white", className)}>
      <h2>{children}</h2>
      <button aria-label={`关闭${children}`} className="ml-auto"><Icon name="close" className="size-[7px] stroke-2" /></button>
    </div>
  );
}

type Prop = { name: string; value: string; mark?: ReactNode };

const basics: Prop[] = [
  { name: "颜色", value: "随层", mark: <i className="mr-[3px] inline-block size-[5px] bg-white" /> },
  { name: "图层", value: "0" },
  { name: "线型", value: "随层", mark: <i className="mr-0.5 inline-block h-px w-7 bg-[#c4cacf] align-middle" /> },
  { name: "线型比例", value: "1" },
  { name: "线宽", value: "随层", mark: <i className="mr-0.5 inline-block h-px w-6 bg-[#c4cacf] align-middle" /> },
  { name: "透明度", value: "随层" },
  { name: "厚度", value: "0" },
];
const view: Prop[] = [
  { name: "中心点 X", value: "555.8901" },
  { name: "中心点 Y", value: "450.4994" },
  { name: "中心点 Z", value: "0" },
  { name: "高度", value: "607.7385" },
  { name: "宽度", value: "2047.392" },
];
const misc: Prop[] = [
  { name: "注释比例", value: "1:1" },
  { name: "打开 U...", value: "是" },
  { name: "在原点...", value: "是" },
  { name: "每个视...", value: "是" },
  { name: "UCS ...", value: "" },
  { name: "视觉样式", value: "二维线框" },
];

function PropSection({ title, rows, className, dim }: { title: string; rows: Prop[]; className: string; dim?: boolean }) {
  return (
    <section className="mb-[3px]">
      <button className="flex h-[15px] w-full items-center justify-between bg-[#393c42] px-[3px]">
        {title}
        <Caret />
      </button>
      <div className="pl-[9px]">
        <table className={clsx("w-full table-fixed border-collapse", className)}>
          <tbody>
            {rows.map((r) => (
              <tr key={r.name} className="border-b border-[#505a65]">
                <th scope="row" className="w-[34px] border-x border-[#505a65] pt-[3px] pl-[2px] text-left leading-[10px] font-normal whitespace-nowrap">{r.name}</th>
                <td className={clsx("border-r border-[#505a65] pl-[2px] leading-[10px] whitespace-nowrap", dim && "text-[#8d959d]")}>
                  {r.mark}
                  {r.value}
                </td>
              </tr>
            ))}
          </tbody>
        </table>
      </div>
    </section>
  );
}

function Properties() {
  return (
    <aside className="mr-[5px] flex w-[138px] shrink-0 flex-col border-x border-[#29303a] bg-[#414b57] text-[#e2e6e9]">
      <PanelTitle className="pl-[6px]">特性</PanelTitle>
      <div className="flex items-center gap-[5px] pt-1 pr-[5px] pb-1 pl-1">
        <div className="flex h-3.5 min-w-0 flex-1 items-center border border-[#4c5661]">
          <select aria-label="选择对象" className="h-full min-w-0 flex-1 appearance-none bg-transparent">
            <option>无选择</option>
          </select>
          <Caret className="pointer-events-none mr-0.5 w-1.5" />
        </div>
        {["pickAdd", "pickSet", "quick"].map((n) => (
          <button key={n} aria-label={n}><Icon name={n} className="size-[11px]" /></button>
        ))}
      </div>
      <div className="pr-[11px] pl-1">
        <PropSection title="基本" rows={basics} className="h-[110px]" />
        <PropSection title="视图" rows={view} className="h-[79px]" dim />
        <PropSection title="其他" rows={misc} className="h-[94px]" />
      </div>
    </aside>
  );
}

const keypad = ["C", "<--", "sqrt", "/", "1/x", "7", "8", "9", "*", "x^2", "4", "5", "6", "+", "x^3", "1", "2", "3", "-", "x^y", "0", ".", "pi", "(", ")", "=", "MS", "M+", "MR", "MC"];
const science = ["sin", "cos", "tan", "log", "10^x", "asin", "acos", "atan", "ln", "e^x", "r2d", "d2r", "abs", "rnd", "trunc"];
const variables = ["Phi", "dee", "ille", "mee", "nee", "rad"];
const units = [["单位类型", "长度"], ["转换自", "米"], ["转换到", "米"], ["要转换的值", "0"], ["已转换的值", "0"]];

function Keys({ keys }: { keys: string[] }) {
  return (
    <div className="ml-1.5 grid w-[142px] grid-cols-5 gap-x-1.5 gap-y-1">
      {keys.map((k) => (
        <button key={k} className="h-[13px] border border-[#78818b] leading-[10px] whitespace-nowrap">{k}</button>
      ))}
    </div>
  );
}

function Heading({ children }: { children: string }) {
  return <h3 className="ml-0.5 h-3 text-[9px] leading-3 font-bold text-white">{children}&lt;&lt;</h3>;
}

function VarIcon({ mark, className }: { mark?: boolean; className?: string }) {
  return (
    <svg viewBox="0 0 10 10" className={clsx("size-[9px] shrink-0", className)} fill="none" stroke="currentColor" aria-hidden="true">
      <path d="M1 8.500h1L7 2h1.500M3 2h1l2 6.500h1.500" />
      {mark && <path d="M8.500 0v4M6.500 2h4" stroke="#f2d25c" />}
    </svg>
  );
}

function Calculator() {
  return (
    <aside className="mr-[3px] flex w-[171px] shrink-0 flex-col overflow-hidden bg-[#414b57] text-[#e2e6e9]">
      <PanelTitle className="pl-[10px]">计算器</PanelTitle>
      <div className="flex gap-[3px] pt-1.5 pl-[9px]">
        {["eraser", "history", "toCmd", "pick", "measure", "angle", "intersect", "help"].map((n) => (
          <button key={n} aria-label={n} className="flex size-[13px] items-center justify-center border border-[#767d85]"><Icon name={n} className="size-[10px]" /></button>
        ))}
      </div>
      <div className="flex min-h-0 flex-1">
        <div className="min-w-0 flex-1 overflow-hidden pt-[9px] pl-[5px]">
          <textarea aria-label="计算历史" className="block h-[51px] w-[154px] resize-none border border-[#535d68] bg-transparent" />
          <input aria-label="表达式" className="mt-0.5 mb-[6px] block h-[13px] w-[154px] border border-[#535d68] bg-transparent" />
          <Heading>数字键区</Heading>
          <Keys keys={keypad} />
          <div className="h-[10px]" />
          <Heading>科学</Heading>
          <Keys keys={science} />
          <div className="h-[10px]" />
          <Heading>变量</Heading>
          <div className="ml-1.5 flex h-[13px] items-center gap-1 text-[#5aa9dd]">
            <button aria-label="新建变量" className="flex size-3 items-center justify-center border border-[#9aa1a8]"><VarIcon mark /></button>
            <button aria-label="编辑变量" className="flex size-3 items-center justify-center"><VarIcon mark /></button>
            <button aria-label="删除变量" className="flex size-3 items-center justify-center text-[#9aa1a8]"><VarIcon /></button>
            <button aria-label="返回变量" className="flex size-3 items-center justify-center"><Icon name="sheet" className="size-[9px]" /></button>
          </div>
          <div className="flex h-[87px] w-[154px] border border-[#535d68]">
            <ul className="h-[85px] flex-1 overflow-hidden pl-1 leading-[10px]">
              <li className="flex h-3 items-center">
                <i className="mr-1 flex size-[5px] items-center bg-white px-px"><b className="h-px w-full bg-[#333]" /></i>
                <Icon name="folder" className="mr-1 size-[10px]" />
                变量样例
              </li>
              {variables.map((v) => (
                <li key={v} className="ml-[26px] flex h-3 items-center gap-[3px]">
                  {v === "Phi" ? <b className="w-[9px] text-center text-[#5aa9dd]">k</b> : <VarIcon className="text-[#5aa9dd]" />}
                  {v}
                </li>
              ))}
            </ul>
            <div className="flex w-2.5 flex-col bg-[#393c42] py-0.5">
              <Chevron d={chevronUp} />
              <div className="mt-[3px] mb-6 flex-1 bg-[#525d69]" />
              <Chevron d={chevronDown} />
            </div>
          </div>
          <label htmlFor="details" className="ml-0.5 block h-[13px] leading-3">详细信息</label>
          <textarea id="details" className="mb-[19px] ml-px block h-[50px] w-[152px] resize-none border border-[#535d68] bg-transparent" />
          <Heading>单位转换</Heading>
          <table className="ml-[3px] w-[149px] border-collapse">
            <tbody>
              {units.map(([name, value]) => (
                <tr key={name} className="h-[13px] border-b border-[#505a65]">
                  <th scope="row" className="w-[65px] border-r border-[#505a65] pl-3.5 text-left leading-[12px] font-normal">{name}</th>
                  <td className="pl-[3px] leading-[12px]">{value}</td>
                </tr>
              ))}
            </tbody>
          </table>
        </div>
        <div className="mr-[3px] flex w-[6px] flex-col bg-[#393d46] pt-0.5 pb-1">
          <Chevron d={chevronUp} />
          <div className="mt-0.5 h-24 bg-[#505b67]" />
          <div className="flex-1" />
          <Chevron d={chevronDown} />
        </div>
      </div>
    </aside>
  );
}

export default function App() {
  return (
    <div className="flex h-screen flex-col overflow-hidden bg-[#323842] font-[Open_Sans,Noto_Sans_CJK_SC,sans-serif] text-[8px] leading-[12px]">
      <TitleBar />
      <MenuBar />
      <Toolbars />
      <main className="flex min-h-0 flex-1 pt-px">
        <div className="mr-[3px] flex min-w-0 flex-1 flex-col">
          <div className="flex min-h-0 flex-1 items-stretch">
            <Rail names={draw} className="mr-[3px] h-[264px]" />
            <Drawing />
            <div className="ml-px flex w-[35px]">
              <div>
                <Rail names={modify} className="h-[279px]" />
                <Rail names={order} className="h-[136px]" />
              </div>
              <Rail names={mech} className="h-[207px]" />
            </div>
          </div>
          <CommandLine />
        </div>
        <Properties />
        <Calculator />
      </main>
      <footer className="h-[17px] shrink-0 pl-0.5 font-[Liberation_Mono,Noto_Sans_CJK_SC,monospace] text-[7px] leading-[17px] text-[#a4aab1]">自定义设置: OPTIONS</footer>
    </div>
  );
}
